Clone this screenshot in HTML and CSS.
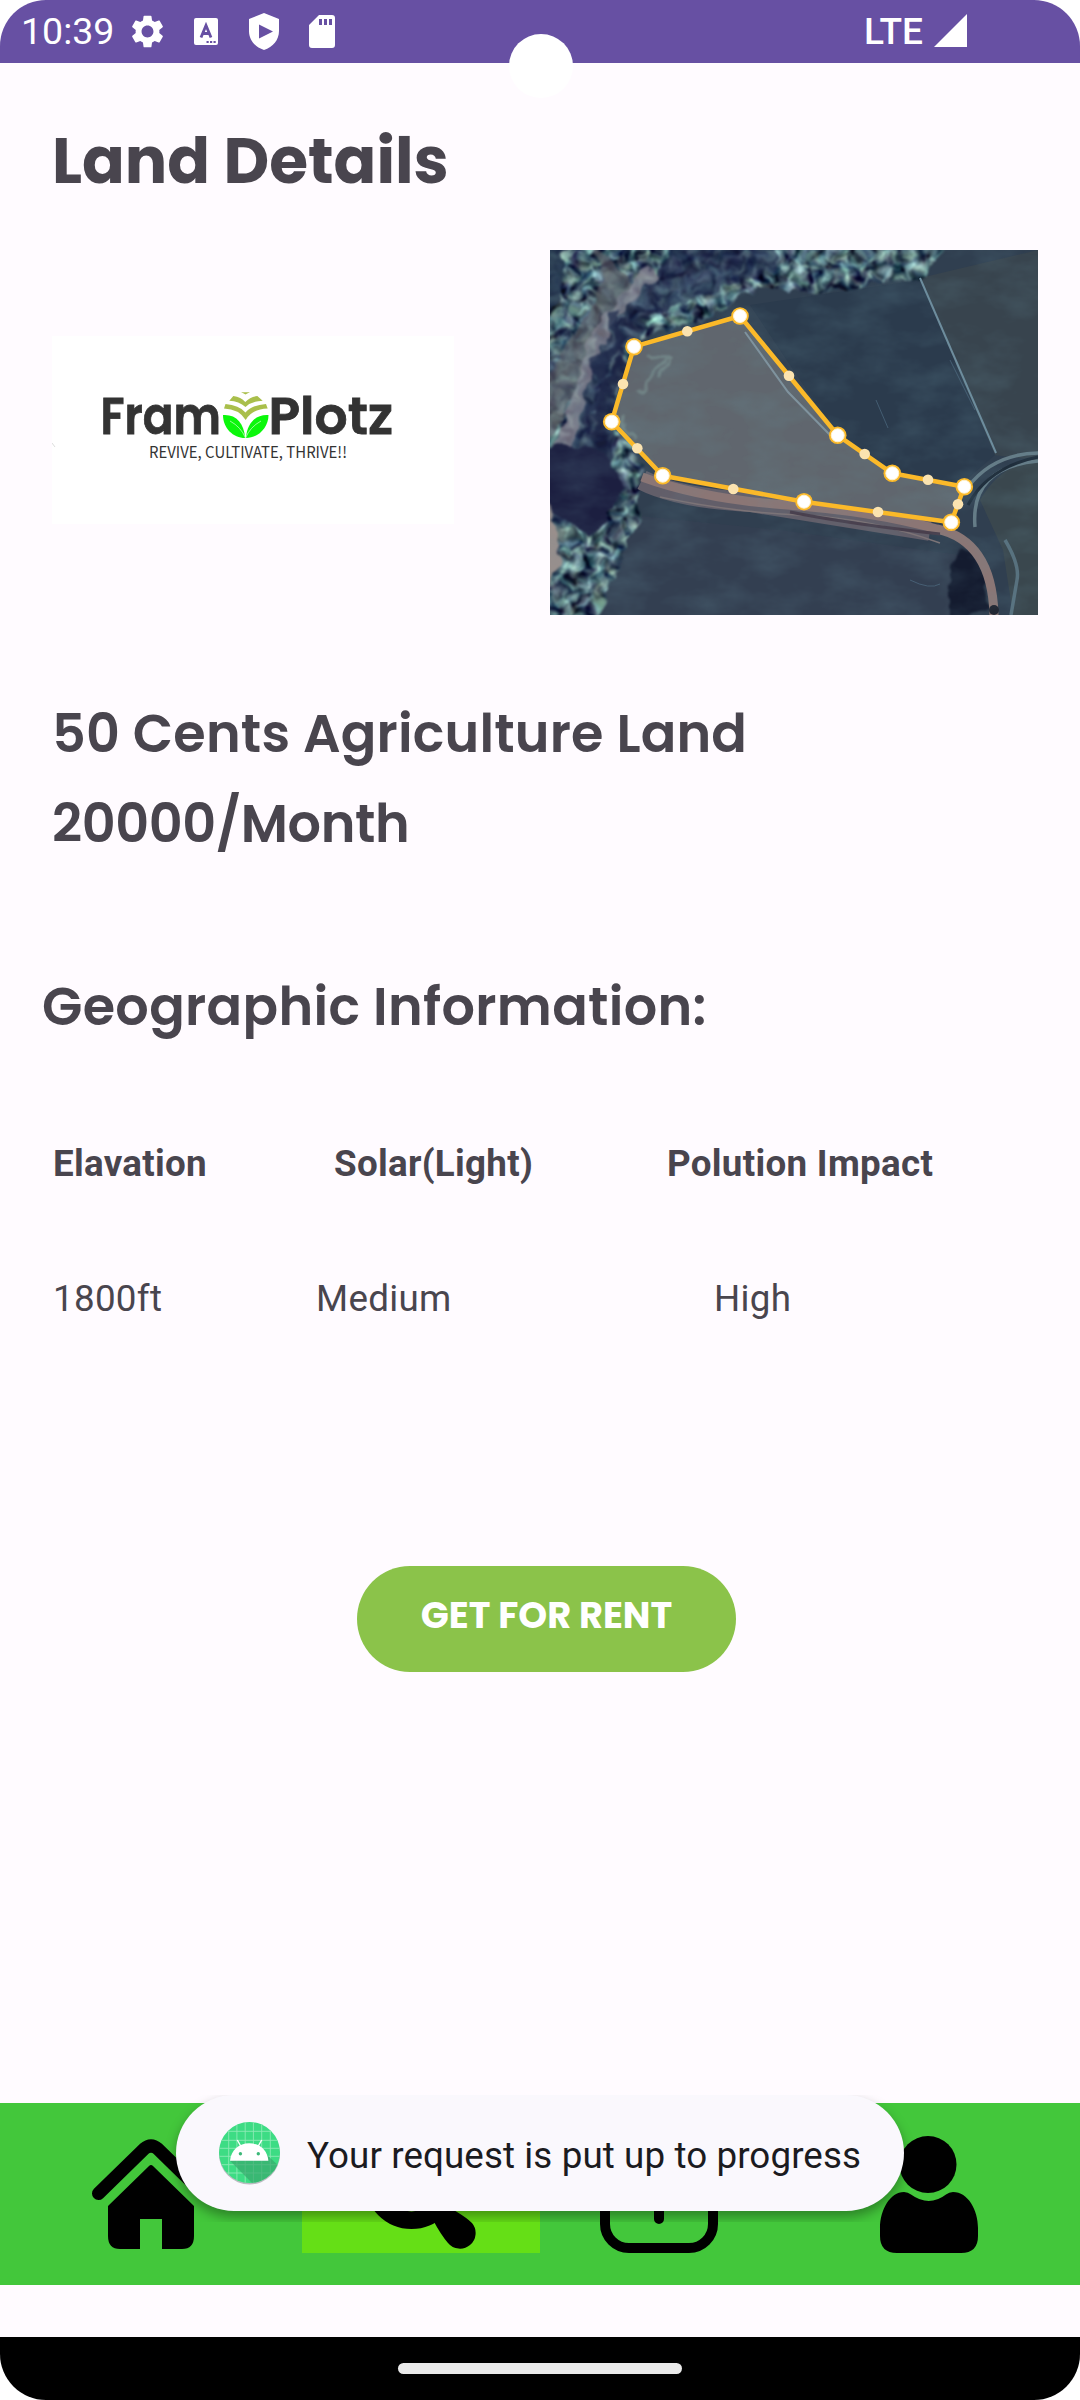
FILE: index.html
```html
<!DOCTYPE html>
<html lang="en">
<head>
<meta charset="utf-8">
<title>Land Details</title>
<link rel="stylesheet" href="styles.css">
</head>
<body>
<div class="screen">
  <header class="status">
    <span class="clock">10:39</span>
    <svg class="ic-gear" viewBox="2 2 20 20"><path fill="#fff" d="M19.14 12.94c.04-.3.06-.61.06-.94 0-.32-.02-.64-.07-.94l2.03-1.58c.18-.14.23-.41.12-.61l-1.92-3.32c-.12-.22-.37-.29-.59-.22l-2.39.96c-.5-.38-1.03-.7-1.62-.94l-.36-2.54c-.04-.24-.24-.41-.48-.41h-3.84c-.24 0-.43.17-.47.41l-.36 2.54c-.59.24-1.13.57-1.62.94l-2.39-.96c-.22-.08-.47 0-.59.22L2.74 8.87c-.12.21-.08.47.12.61l2.03 1.58c-.05.3-.09.63-.09.94s.02.64.07.94l-2.03 1.58c-.18.14-.23.41-.12.61l1.92 3.32c.12.22.37.29.59.22l2.39-.96c.5.38 1.03.7 1.62.94l.36 2.54c.05.24.24.41.48.41h3.84c.24 0 .44-.17.47-.41l.36-2.54c.59-.24 1.13-.56 1.62-.94l2.39.96c.22.08.47 0 .59-.22l1.92-3.32c.12-.22.07-.47-.12-.61l-2.01-1.58zM12 15.6c-1.98 0-3.6-1.62-3.6-3.6s1.62-3.6 3.6-3.6 3.6 1.62 3.6 3.6-1.62 3.6-3.6 3.6z"/></svg>
    <svg class="ic-a" viewBox="0 0 24 27"><rect width="24" height="27" rx="2" fill="#fff"/><path d="M7 19.500 12 7.500 17 19.500M9 15.500h6" fill="none" stroke="#6750a3" stroke-width="2.800"/><path d="M12.500 23h2.200v2h-2.200zM16 23h2.200v2H16zM19.500 23h2.200v2h-2.200z" fill="#6750a3"/></svg>
    <svg class="ic-shield" viewBox="0 0 30 37"><path fill="#fff" fill-rule="evenodd" d="M15 0 30 6v12c0 9-6 16-15 19C6 34 0 27 0 18V6zM10 11.500v14L24 18.500z"/></svg>
    <svg class="ic-sd" viewBox="0 0 26 33"><path fill="#fff" fill-rule="evenodd" d="M10 0h13a3 3 0 0 1 3 3v27a3 3 0 0 1-3 3H3a3 3 0 0 1-3-3V10zM10 4v6h3V4zM15 4v6h3V4zM20 4v6h3V4z"/></svg>
    <span class="lte">LTE</span>
    <svg class="ic-signal" viewBox="0 0 33 33"><path fill="#fff" d="M33 0v33H0z"/></svg>
    <span class="camera"></span>
  </header>

  <main class="content">
    <h1 class="title">Land Details</h1>
    <div class="media">
      <svg class="logo" viewBox="0 0 402 188" role="img" aria-label="Fram Plotz">
        <rect width="402" height="188" fill="#fff"/>
        <text class="logo-name" x="48.500" y="97.500" textLength="120.500" lengthAdjust="spacingAndGlyphs">Fram</text>
        <text class="logo-name" x="216.500" y="97.500" textLength="124.500" lengthAdjust="spacingAndGlyphs">Plotz</text>
        <g fill="#a9bf4b">
          <path d="M189 56q4 .6 9 0l-4.500 2.500z"/>
          <path d="M177.300 64.700 181.300 60Q189 61 193.300 66 198 61 205.300 60L210.700 64.700Q200 65 193.500 71 187 65 177.300 64.700z"/>
          <path d="M172 72.500 173.500 68Q187 69 193.500 76.500 200 69 214 68L215.700 72.500Q200 73 193.700 84 187 73 172 72.500z"/>
        </g>
        <path fill="#0bf70b" d="M171 79C184 78 192 87 193.200 102 181 102 171 92 171 79zM216.500 79C204 78 195 87 194 102 206 102 216.500 92 216.500 79z"/>
        <path d="M178 85q11 6 15.500 17Q198 91 209 85" fill="none" stroke="#baffba" stroke-width=".8"/>
        <text class="logo-tag" x="97" y="122" textLength="198" lengthAdjust="spacingAndGlyphs">REVIVE, CULTIVATE, THRIVE!!</text>
        <path d="M0 107l3 4" stroke="#ddd"/>
      </svg>
      <svg class="map" viewBox="0 0 488 365" role="img" aria-label="Plot boundary">
        <defs>
          <filter id="leaves" x="0" y="0" width="100%" height="100%" color-interpolation-filters="sRGB">
            <feTurbulence type="fractalNoise" baseFrequency=".09" numOctaves="3" seed="8"/>
            <feColorMatrix values="1.200 .2 0 0 -.42  1.500 0 0 0 -.37  1.200 0 .2 0 -.27  0 0 0 0 1"/>
            <feComposite in2="SourceGraphic" operator="in"/>
          </filter>
          <filter id="soil" x="0" y="0" width="100%" height="100%" color-interpolation-filters="sRGB">
            <feTurbulence type="fractalNoise" baseFrequency=".02 .035" numOctaves="4" seed="3"/>
            <feColorMatrix values="0 0 0 0 .4  0 0 0 0 .55  0 0 0 0 .6  0 1.400 0 0 -.55"/>
            <feComposite in2="SourceGraphic" operator="in"/>
          </filter>
          <filter id="rough" x="-10%" y="-10%" width="120%" height="120%" color-interpolation-filters="sRGB">
            <feTurbulence type="fractalNoise" baseFrequency=".06" numOctaves="2" seed="5"/>
            <feDisplacementMap in="SourceGraphic" scale="16" xChannelSelector="R" yChannelSelector="G"/>
            <feGaussianBlur stdDeviation="1"/>
          </filter>
        </defs>
        <rect width="488" height="365" fill="#303f50"/>
        <path d="M370 28 488 0v210l-45-5z" fill="#38444e"/>
        <path d="M200 55 370 30l75 175-35 30-70-10-60-50z" fill="#2b3b4d"/>
        <path d="M80 265l150 15 180 25-5 60H35z" fill="#333f51"/>
        <path d="M430 250q20-35 58-42v157h-25l-10-65z" fill="#3a474e"/>
        <g filter="url(#rough)">
          <g filter="url(#leaves)"><path d="M-15-15h425l-40 42-90 15-75-2-60 35-60 15-20 75 30 50-5 25 0 25-45 110H-15z"/></g>
          <path d="M130-10h90l5 30-75 25-50 20-35 60-20 70 10 60-10 30-50-20 30-100 20-70 50-60z" fill="#1a2246" opacity=".6"/>
          <path d="M-10-10h28l-10 60-18 30z" fill="#1c2a45" opacity=".8"/>
          <path d="M45-5q20 40-15 80L-12 140v70q35-55 45-100 15-45 50-75" fill="#5f5d66" opacity=".65"/>
          <path d="M105 20 75 50Q45 80 36 120L12 205" fill="none" stroke="#8b8793" stroke-width="13" opacity=".75"/>
          <path d="M62 60l8 35-25 15 15 30-25 25" fill="none" stroke="#202a4b" stroke-width="9" opacity=".8"/>
          <path d="M72 110l-15 40-5 60" fill="none" stroke="#1b2344" stroke-width="16" opacity=".8"/>
          <path d="M-5 200q55-15 70 20t-25 65l-45-25z" fill="#1c1f40"/>
          <path d="M-5 250l15 30-2 40-13 20z" fill="#9a8f8c"/>
          <path d="M400 315l15-15 18 14 7 45-40 15z" fill="#141b2f"/>
        </g>
        <path d="M370 28 446 203" stroke="#6e8d9e" stroke-width="2" fill="none"/>
        <path d="M400 110l25 50M326 150l12 28M360 330q20 10 30 4" stroke="#54738a" stroke-width="1" fill="none" opacity=".6"/>
        <path d="M418 237q25-33 70-34M425 277q-5-60 63-66" stroke="#657c87" stroke-width="3.500" fill="none"/>
        <path d="M418 255q20-38 70-48" stroke="#1c2937" stroke-width="3" fill="none"/>
        <path d="M455 290q15 25 12 40l-6 35" stroke="#58717e" stroke-width="3.500" fill="none"/>
        <path d="M92 230q35 18 108 22 95 15 180 29" stroke="#625e69" stroke-width="20" fill="none"/>
        <path d="M92 227q60 22 145 28t150 24q55 12 57 86" stroke="#8b7675" stroke-width="9" fill="none"/>
        <path d="M110 247q70 15 140 18t140 28" stroke="#7d7376" stroke-width="1.500" fill="none"/>
        <path d="M240 262q60 12 150 22" stroke="#493f4d" stroke-width="3" fill="none"/>
        <circle cx="444" cy="360" r="5" fill="#222733"/>
        <rect width="488" height="365" filter="url(#soil)" opacity=".3"/>
        <path d="M190 66 84 96.700 61.700 171.700 112.700 225.700 254 251.700 401.300 272.300 414.300 236.700 342.300 223.300 287.700 185.300z" fill="#636970" fill-opacity=".94"/>
        <path d="M190 66 84 96.700 61.700 171.700 112.700 225.700 254 251.700 401.300 272.300 414.300 236.700 342.300 223.300 287.700 185.300z" filter="url(#soil)" opacity=".35"/>
        <path d="M195 82 238 142 280 185" stroke="#7f939e" stroke-width="2" fill="none"/>
        <path d="M95 105l22 5-12 10-15 20M73 165l12 25M120 110l-10 18" stroke="#83a09d" stroke-width="3" fill="none" opacity=".5" filter="url(#rough)"/>
        <path d="M190 66 84 96.700 61.700 171.700 112.700 225.700 254 251.700 401.300 272.300 414.300 236.700 342.300 223.300 287.700 185.300z" fill="none" stroke="#fbb929" stroke-width="4.500" stroke-linejoin="round"/>
        <g fill="#fbe3b0">
          <circle cx="137.300" cy="81.300" r="5.300"/><circle cx="73" cy="134" r="5.300"/><circle cx="87.300" cy="198.300" r="5.300"/>
          <circle cx="183.300" cy="239" r="5.300"/><circle cx="328" cy="262" r="5.300"/><circle cx="408" cy="254.300" r="5.300"/>
          <circle cx="378" cy="229.700" r="5.300"/><circle cx="314.700" cy="204" r="5.300"/><circle cx="239" cy="125.700" r="5.300"/>
        </g>
        <g fill="#fbb929">
          <circle cx="190" cy="66" r="8.800"/><circle cx="84" cy="96.700" r="8.800"/><circle cx="61.700" cy="171.700" r="8.800"/>
          <circle cx="112.700" cy="225.700" r="8.800"/><circle cx="254" cy="251.700" r="8.800"/><circle cx="401.300" cy="272.300" r="8.800"/>
          <circle cx="414.300" cy="236.700" r="8.800"/><circle cx="342.300" cy="223.300" r="8.800"/><circle cx="287.700" cy="185.300" r="8.800"/>
        </g>
        <g fill="#fff" stroke="#fff3cf" stroke-width="1">
          <circle cx="190" cy="66" r="6.500"/><circle cx="84" cy="96.700" r="6.500"/><circle cx="61.700" cy="171.700" r="6.500"/>
          <circle cx="112.700" cy="225.700" r="6.500"/><circle cx="254" cy="251.700" r="6.500"/><circle cx="401.300" cy="272.300" r="6.500"/>
          <circle cx="414.300" cy="236.700" r="6.500"/><circle cx="342.300" cy="223.300" r="6.500"/><circle cx="287.700" cy="185.300" r="6.500"/>
        </g>
      </svg>
    </div>
    <p class="line line-name">50 Cents Agriculture Land</p>
    <p class="line line-price">20000/Month</p>
    <h2 class="line line-geo">Geographic Information:</h2>
    <div class="row heads"><span>Elavation</span><span>Solar(Light)</span><span>Polution Impact</span></div>
    <div class="row values"><span>1800ft</span><span>Medium</span><span>High</span></div>
    <button class="rent" type="button">GET FOR RENT</button>
  </main>

  <nav class="tabs">
    <a class="tab"><svg viewBox="0 0 302 117"><path d="M98.500 57.500 144 13q7-6 14 0l45.500 44.500" fill="none" stroke="#000" stroke-width="13" stroke-linecap="round"/><path d="M149 30q2-2 4 0l41 40v30q0 13-12 13h-20V83h-22v30h-20q-12 0-12-13V70z"/></svg></a>
    <a class="tab selected"><svg viewBox="0 0 238 117"><circle cx="109.500" cy="46" r="38.200" fill="none" stroke="#000" stroke-width="17.500"/><path d="M131 84q8 15 15 23A15.500 15.500 0 1 0 170 87q-5-5-15-11L130 60z"/></svg></a>
    <a class="tab"><svg viewBox="0 0 238 117"><rect x="65" y="5" width="108" height="107" rx="24" fill="none" stroke="#000" stroke-width="10"/><path d="M119 36v47M95.500 59.500h47" stroke="#000" stroke-width="10" stroke-linecap="round"/></svg></a>
    <a class="tab"><svg viewBox="0 0 302 117"><circle cx="150" cy="28.500" r="28.500"/><path d="M126 56q4 0 7 2.500 18 13 35 0 3-2.500 7-2.500C190 56 200 74 200 92v8q0 17-17 17h-64q-17 0-17-17v-8C102 74 112 56 126 56z"/></svg></a>
  </nav>
  <footer class="gesture"><span class="pill"></span></footer>

  <div class="toast">
    <svg class="toast-icon" viewBox="0 0 61 63">
      <defs><clipPath id="disc"><circle cx="30.500" cy="30.500" r="30.500"/></clipPath></defs>
      <circle cx="30.500" cy="32" r="30.500" fill="#b9bcc0"/>
      <g clip-path="url(#disc)">
        <rect width="61" height="61" fill="#3ddc84"/>
        <path d="M9.700 0v61M17.900 0v61M26.200 0v61M34.400 0v61M42.700 0v61M51.300 0v61M0 9.300h61M0 18.300h61M0 26.300h61M0 34.300h61M0 42.700h61M0 51h61" stroke="#8deab6" stroke-width=".9"/>
        <path d="M11 38.700 34 62l27-10V45L48 33z" fill="#37a86c" fill-opacity=".7"/>
      </g>
      <path d="M11 38.700C12 28 20 21.300 30.200 21.300S48.400 28 49.400 38.700z" fill="#fff"/>
      <path d="M18.300 18 22 24.500M42.700 18 39 24.500" stroke="#fff" stroke-width="1.400"/>
      <circle cx="21.400" cy="31.700" r="1.700" fill="#3cb878"/><circle cx="39.300" cy="31.700" r="1.700" fill="#3cb878"/>
    </svg>
    <span class="toast-text">Your request is put up to progress</span>
  </div>
</div>
</body>
</html>
```
FILE: styles.css
```css
* { box-sizing: border-box; margin: 0; padding: 0; }
body { background: #fff; font-family: Roboto, sans-serif; }
svg { display: block; }
.screen { position: relative; width: 1080px; height: 2400px; display: flex; flex-direction: column; background: #fffbff; border-radius: 46px; overflow: hidden; color: #49454e; }

.status { position: relative; height: 63px; display: flex; align-items: center; background: #6750a3; color: #fff; padding-left: 21px; flex: none; }
.clock { font-size: 37.500px; line-height: 65px; width: 110px; }
.ic-gear { width: 33px; height: 33px; margin-right: 30px; }
.ic-a { width: 24px; height: 27px; margin-right: 31px; }
.ic-shield { width: 30px; height: 37px; margin-right: 30px; }
.ic-sd { width: 26px; height: 33px; }
.lte { font-size: 37px; font-weight: 500; margin-left: auto; }
.ic-signal { width: 33px; height: 33px; margin: -2px 113px 0 11px; }
.camera { position: absolute; left: 509px; top: 34px; width: 64px; height: 64px; border-radius: 50%; background: #fff; }

.content { display: flex; flex-direction: column; padding-left: 52px; }
.title { font: 700 63px/96px Poppins, Inter, sans-serif; margin-top: 50px; }
.media { display: flex; align-items: flex-start; margin-top: 41px; height: 365px; }
.logo { width: 402px; height: 188px; margin-top: 86px; }
.logo-name { font: 600 51px Poppins, Inter, sans-serif; fill: #333; stroke: #333; stroke-width: .8px; }
.logo-tag { font: 400 15.700px "Noto Sans CJK JP", sans-serif; fill: #333; }
.map { width: 488px; height: 365px; margin-left: 96px; }
.line { font: 600 52.500px/90px Poppins, Inter, sans-serif; white-space: nowrap; }
.line-name { margin-top: 74px; letter-spacing: .2px; }
.line-price { letter-spacing: -.42px; }
.line-geo { margin: 93px 0 0 -10px; letter-spacing: .32px; }
.row { display: grid; font-size: 36.750px; line-height: 44px; letter-spacing: .3px; white-space: nowrap; padding-left: 1px; }
.heads { grid-template-columns: 281px 333px 1fr; font-weight: 700; margin-top: 90px; }
.values { grid-template-columns: 263px 398px 1fr; margin-top: 91px; }
.rent { width: 379px; height: 106px; margin: 245px 0 0 305px; border: 0; border-radius: 53px; background: #8bc34a; color: #fff; font: 700 36.750px/44px Poppins, Inter, sans-serif; padding-bottom: 8px; }

.tabs { display: grid; grid-template-columns: 302px 238px 238px 302px; height: 182px; margin-top: auto; padding: 33px 0 32px; background: #43c73b; flex: none; }
.selected { background: #65df16; }
.gesture { height: 63px; margin-top: 52px; background: #000; display: flex; justify-content: center; flex: none; }
.pill { width: 284px; height: 11px; margin-top: 26px; border-radius: 6px; background: #eaeaea; }

.toast { position: absolute; left: 176px; top: 2095px; width: 728px; height: 116px; border-radius: 58px; background: #faf8fd; display: flex; align-items: center; padding-left: 43px; font-size: 36.750px; color: #1b1b1f; box-shadow: 0 6px 12px rgba(0, 0, 0, .34); clip-path: inset(0 -12px -11px); }
.toast-icon { width: 61px; height: 63px; flex: none; }
.toast-text { margin-left: 27px; padding-top: 5px; white-space: nowrap; letter-spacing: .1px; }
```
